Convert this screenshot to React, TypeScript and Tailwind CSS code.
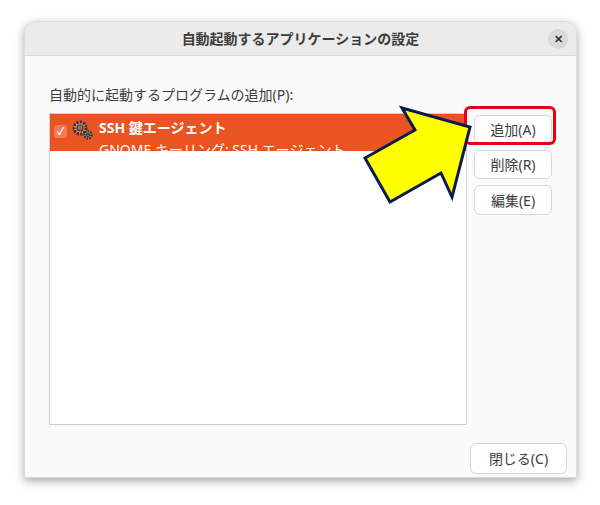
import React from 'react';

const FONT = { fontFamily: '"Noto Sans", "Noto Sans CJK JP", sans-serif' };

function Btn({ label, className = '' }: { label: string; className?: string }) {
    return (
        <button className={`flex items-center justify-center rounded-md border border-[#d6d6d6] bg-white text-[14px] text-[#3d3d3d] ${className}`}>
            {label}
        </button>
    );
}

export default function App() {
    return (
        <div className="relative h-[505px] w-[600px] bg-white pl-[24px] pt-[21px]" style={FONT}>
            <div className="flex h-[457px] w-[553px] flex-col overflow-hidden rounded-t-xl border border-[#dcdcdc] bg-[#fafafa] shadow-[0_3px_10px_rgba(0,0,0,0.35)]">
                {/* Header */}
                <div className="relative flex h-[34px] items-center justify-center border-b border-[#d8d8d8] bg-[#ebebeb]">
                    <span className="text-[14px] font-bold text-[#3d3d3d]">自動起動するアプリケーションの設定</span>
                    <div className="absolute right-[8px] top-[7px] flex h-[20px] w-[20px] items-center justify-center rounded-full bg-[#d9d9d9] text-[11px] font-bold text-[#333]">✕</div>
                </div>
                {/* Body */}
                <div className="flex flex-1 flex-col px-[24px] pt-[28px]">
                    <div className="mb-[8px] text-[14px] text-[#3d3d3d]">自動的に起動するプログラムの追加(P):</div>
                    <div className="flex gap-[7px]">
                        <div className="h-[312px] w-[420px] border border-[#cfcfcf] bg-white">
                            <div className="flex h-[37px] overflow-hidden bg-[#e95420] pl-[4px]">
                                <div className="mt-[11px] flex h-[13px] w-[13px] items-center justify-center rounded-[3px] bg-[#f07c55] text-[10px] font-bold text-white">✓</div>
                                <svg width="22" height="22" viewBox="0 0 22 22" className="ml-[5px] mt-[5px]">
                                    <g fill="#b0a8a0" stroke="#333" strokeWidth="1.2">
                                        <circle cx="8" cy="9" r="6" strokeDasharray="2.2 1.2" strokeWidth="3" />
                                        <circle cx="8" cy="9" r="3" fill="#e95420" />
                                        <circle cx="16" cy="16" r="3.5" strokeDasharray="1.6 1" strokeWidth="2.5" />
                                        <circle cx="16" cy="16" r="1.5" fill="#e95420" />
                                    </g>
                                </svg>
                                <div className="ml-[5px] flex flex-col leading-[18px] text-white">
                                    <span className="mt-[5px] text-[14px] font-bold">SSH 鍵エージェント</span>
                                    <span className="mt-[4px] text-[14px]">GNOME キーリング: SSH エージェント</span>
                                </div>
                            </div>
                        </div>
                        <div className="flex flex-col gap-[6px] pt-[2px]">
                            <div className="relative">
                                <div className="absolute left-[-10px] top-[-9px] h-[39px] w-[92px] rounded-md border-[3px] border-[#e60012]" />
                                <Btn label="追加(A)" className="h-[29px] w-[78px]" />
                            </div>
                            <Btn label="削除(R)" className="h-[29px] w-[78px]" />
                            <Btn label="編集(E)" className="h-[30px] w-[78px]" />
                        </div>
                    </div>
                    <div className="-mr-[15px] mt-[18px] flex justify-end">
                        <Btn label="閉じる(C)" className="h-[31px] w-[97px]" />
                    </div>
                </div>
            </div>
            <svg className="absolute left-0 top-0" width="600" height="505">
                <polygon
                    points="402,108 470,127 452,197 441,173 390,202 365,158 415,130"
                    fill="#ffff00"
                    stroke="#0d1a50"
                    strokeWidth="3"
                    strokeLinejoin="miter"
                />
            </svg>
        </div>
    );
}
